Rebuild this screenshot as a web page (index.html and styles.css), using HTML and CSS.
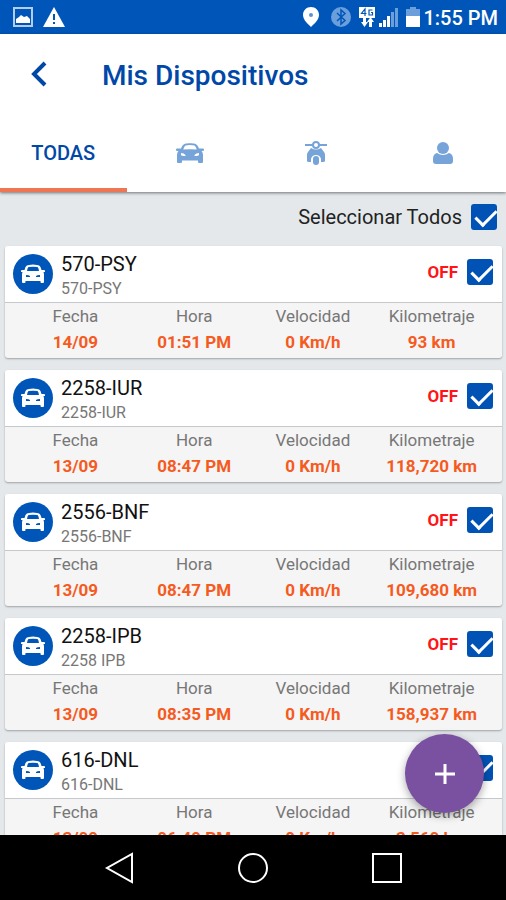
FILE: index.html
```
<!DOCTYPE html>
<html lang="es">
<head>
    <title>Mis Dispositivos</title>
    <meta name="viewport" content="width=device-width, initial-scale=1">
    <meta charset="UTF-8">
    <link rel="stylesheet" href="styles.css">
</head>
<body>
    <svg class="sprite" aria-hidden="true">
        <symbol id="car" viewBox="0 0 28 20">
            <path fill-rule="evenodd" d="M9 .8C11 0 17 0 19 .8C21 1.500 22.200 3.500 23 5.500H27Q28 5.500 28 6.500Q28 8 27 8H25.500Q27 9.500 27 12V19Q27 20 26 20H23Q22 20 22 19V17.500H6V19Q6 20 5 20H2Q1 20 1 19V12Q1 9.500 2.500 8H1Q0 8 0 6.500Q0 5.500 1 5.500H5C5.800 3.500 7 1.500 9 .8ZM9.500 2.500Q8 3.500 7.300 6.500Q14 5.800 20.700 6.500Q20 3.500 18.500 2.500Q14 1.500 9.500 2.500ZM5 10V12Q5.500 13 9.500 13V12Q8 10 5 10ZM23 10V12Q22.500 13 18.500 13V12Q20 10 23 10Z"/>
        </symbol>
        <symbol id="carFront" viewBox="0 0 24 20">
            <path fill-rule="evenodd" d="M8 1Q12 0 16 1Q18.500 1 19.500 3L20.500 6H23Q24 6 24 7V8H22.500L23 10V18Q23 19 22 19H20.500Q19.500 19 19.500 18V17H4.500V18Q4.500 19 3.500 19H2Q1 19 1 18V10L1.500 8H0V7Q0 6 1 6H3.500L4.500 3Q5.500 1 8 1ZM7.500 3Q6.500 3.500 6 7H18Q17.500 3.500 16.500 3Q12 2.500 7.500 3ZM5 11V13H9V12Q8 11 5 11ZM19 11V13H15V12Q16 11 19 11Z"/>
        </symbol>
    </svg>

    <div class="status-bar">
        <div class="status-group">
            <svg width="20" height="20" viewBox="0 0 20 20">
                <rect x="1" y="1" width="18" height="18" fill="none" stroke="#b4cdec" stroke-width="2"/>
                <path d="M3 16V12L6 10L8 8L11 10L14 9L17 12V16Z" fill="#fff"/>
            </svg>
            <svg width="22" height="20" viewBox="0 0 22 20">
                <path d="M11 0L22 20H0Z" fill="#fff"/>
                <path d="M10 7H12V13H10ZM10 15H12V17H10Z" fill="#0056b8"/>
            </svg>
        </div>
        <div class="status-group status-right">
            <svg class="pin" width="18" height="20" viewBox="0 0 18 20">
                <path d="M9 0C4.500 0 1 3.500 1 8C1 13 6 17 9 20C12 17 17 13 17 8C17 3.500 13.500 0 9 0Z" fill="#fff"/>
                <circle cx="9" cy="8" r="2" fill="#5b91d2"/>
            </svg>
            <svg width="20" height="20" viewBox="0 0 20 20">
                <circle cx="10" cy="10" r="10" fill="#6b9fdc"/>
                <path d="M6 6L14 13.500L10 17V3L14 6.500L6 14" fill="none" stroke="#0056b8" stroke-width="1.500"/>
            </svg>
            <svg width="39" height="20" viewBox="0 0 39 20">
                <rect width="16" height="11" fill="#fff"/>
                <path d="M6 9V2L2.500 6.500H7.500M13.500 3H10V8H13.500V5.500H12" fill="none" stroke="#0056b8" stroke-width="1.200"/>
                <path d="M4 11H7V15H9L5.500 20L2 15H4ZM10 20H13V15H15L11.500 10L8 15H10Z" fill="#fff"/>
                <path d="M20 16H23V20H20ZM24 13H27V20H24ZM28 9H31V20H28Z" fill="#fff"/>
                <path d="M32 5H35V20H32ZM36 1H39V20H36Z" fill="#6b9fdc"/>
            </svg>
            <svg width="14" height="20" viewBox="0 0 14 20">
                <path d="M4 0H10V2H14V9H0V2H4Z" fill="#6b9fdc"/>
                <path d="M0 9H14V20H0Z" fill="#fff"/>
            </svg>
            <span class="clock">1:55 PM</span>
        </div>
    </div>

    <header class="header">
        <div class="title-bar">
            <button class="back-button" aria-label="Volver">
                <svg width="16" height="26" viewBox="0 0 16 26">
                    <path d="M14 2L3 13L14 24" fill="none" stroke="#0048a8" stroke-width="4"/>
                </svg>
            </button>
            <h1>Mis Dispositivos</h1>
        </div>
        <nav class="tabs">
            <button class="tab active">TODAS</button>
            <button class="tab" aria-label="Autos">
                <svg width="28" height="20"><use href="#car"/></svg>
            </button>
            <button class="tab" aria-label="Motos">
                <svg width="22" height="24" viewBox="0 0 22 24">
                    <path d="M0 3H8V5H0ZM14 3H22V5H14Z"/>
                    <circle cx="11" cy="4" r="3" fill="none" stroke="#76a3d8" stroke-width="2"/>
                    <path d="M6 7Q11 10 16 7L19 11Q20 12 20 14V20Q20 21 18 21H16V18Q15 14 11 14Q7 14 6 18V21H4Q2 21 2 20V14Q2 12 3 11Z"/>
                    <rect x="8" y="15" width="6" height="9" rx="3"/>
                </svg>
            </button>
            <button class="tab" aria-label="Personas">
                <svg width="22" height="24" viewBox="0 0 22 24">
                    <circle cx="11" cy="7" r="6"/>
                    <path d="M5 12Q11 16 17 12Q21 13 21 18V20Q21 23 18 23H4Q1 23 1 20V18Q1 13 5 12Z"/>
                </svg>
            </button>
        </nav>
    </header>

    <main class="content">
        <div class="select-all">
            <label for="selectAll">Seleccionar Todos</label>
            <input type="checkbox" id="selectAll" checked>
        </div>
        <div class="device-list" id="deviceList"></div>
    </main>

    <div class="nav-bar">
        <button class="fab" aria-label="Agregar">
            <svg width="20" height="20" viewBox="0 0 20 20">
                <path d="M10 0V20M0 10H20" stroke="#fff" stroke-width="3"/>
            </svg>
        </button>
        <button class="nav-button" aria-label="Atrás">
            <svg width="32" height="32" viewBox="0 0 32 32"><path d="M29 2V30L4 16Z"/></svg>
        </button>
        <button class="nav-button" aria-label="Inicio">
            <svg width="32" height="32" viewBox="0 0 32 32"><circle cx="16" cy="16" r="14"/></svg>
        </button>
        <button class="nav-button" aria-label="Recientes">
            <svg width="32" height="32" viewBox="0 0 32 32"><rect x="2" y="2" width="28" height="28"/></svg>
        </button>
    </div>

<script src="script.js"></script>
</body>
</html>
```
FILE: styles.css
```
* {
    box-sizing: border-box;
}
html {
    font-family: Roboto, "Liberation Sans", sans-serif;
}
body {
    margin: 0;
    height: 100vh;
    display: flex;
    flex-direction: column;
    background-color: #e4e8eb;
}
button {
    border: none;
    padding: 0;
    background: none;
    font-family: inherit;
    cursor: pointer;
}
svg {
    display: block;
}
.sprite {
    position: absolute;
    width: 0;
    height: 0;
}

.status-bar {
    flex: none;
    height: 34px;
    padding: 0 8px 0 13px;
    display: flex;
    align-items: center;
    justify-content: space-between;
    background-color: #0056b8;
    color: #fff;
}
.status-group {
    display: flex;
    align-items: center;
    gap: 10px;
}
.status-right {
    gap: 8px;
}
.status-right .pin {
    margin-right: 3px;
}
.clock {
    font-size: 20px;
    line-height: 20px;
    padding-top: 2px;
    margin-left: -5px;
    font-weight: 500;
}

.header {
    flex: none;
    background-color: #fff;
    box-shadow: 0 1px 3px rgba(0,0,0,0.5);
    position: relative;
}
.title-bar {
    height: 80px;
    padding: 0 0 0 31px;
    display: flex;
    align-items: center;
    gap: 55px;
}
.title-bar h1 {
    margin: 0;
    padding-top: 2px;
    font-size: 28px;
    font-weight: 500;
    color: #0048a8;
}
.tabs {
    display: grid;
    grid-template-columns: repeat(4, 1fr);
}
.tab {
    height: 78px;
    display: flex;
    align-items: center;
    justify-content: center;
    border-top: 4px solid transparent;
    border-bottom: 4px solid transparent;
    font-size: 20px;
    font-weight: 500;
    color: #0048a8;
    fill: #76a3d8;
}
.tab.active {
    border-bottom-color: #ee7654;
}

.content {
    flex: 1;
    min-height: 0;
    overflow-y: auto;
    scrollbar-width: none;
}
.select-all {
    height: 54px;
    padding: 0 9px 4px;
    display: flex;
    align-items: center;
    justify-content: flex-end;
    gap: 9px;
    font-size: 20px;
    color: #222;
}
input[type="checkbox"] {
    appearance: none;
    flex: none;
    width: 26px;
    height: 26px;
    margin: 0;
    border: 2px solid #0052b4;
    border-radius: 3px;
    position: relative;
}
input[type="checkbox"]:checked {
    background-color: #0052b4;
}
input[type="checkbox"]:checked::after {
    content: "";
    position: absolute;
    left: 7px;
    top: -1px;
    width: 9px;
    height: 18px;
    border: solid #fff;
    border-width: 0 3px 3px 0;
    transform: rotate(45deg);
}

.device-list {
    padding: 0 4px 12px 5px;
    display: flex;
    flex-direction: column;
    gap: 12px;
}
.card {
    background-color: #f5f5f5;
    border-radius: 3px;
    box-shadow: 0 1px 2px rgba(0,0,0,0.3);
    overflow: hidden;
    flex: none;
}
.card-head {
    height: 57px;
    padding: 0 9px 4px 8px;
    display: flex;
    align-items: center;
    background-color: #fff;
    border-bottom: 1px solid #c4c8cb;
}
.avatar {
    width: 40px;
    height: 40px;
    margin-top: 3px;
    border-radius: 50%;
    background-color: #0056b8;
    fill: #fff;
    display: flex;
    align-items: center;
    justify-content: center;
}
.names {
    flex: 1;
    padding: 7px 0 0 8px;
}
.name {
    display: block;
    font-size: 20px;
    line-height: 26px;
    color: #111;
}
.alias {
    font-size: 16px;
    line-height: 24px;
    color: #777;
}
.state {
    margin-right: 9px;
    font-size: 17px;
    font-weight: 700;
    color: #ff1418;
}
.card table {
    width: 100%;
    padding: 0 11px 3px;
    border-spacing: 0;
    table-layout: fixed;
    text-align: center;
}
.card th, .card td {
    padding: 0;
    line-height: 26px;
    font-size: 17px;
}
.card th {
    font-weight: 400;
    color: #777;
}
.card td {
    font-weight: 700;
    color: #f55a1e;
}

.nav-bar {
    flex: none;
    height: 65px;
    display: flex;
    align-items: center;
    justify-content: center;
    gap: 102px;
    background-color: #000;
    position: relative;
}
.nav-button svg {
    fill: none;
    stroke: #fff;
    stroke-width: 2;
}
.fab {
    position: absolute;
    right: 22px;
    bottom: 87px;
    width: 79px;
    height: 79px;
    border-radius: 50%;
    background-color: #7a51a1;
    box-shadow: 0 3px 8px rgba(0,0,0,0.35);
    display: flex;
    align-items: center;
    justify-content: center;
}
```
FILE: script.js
```
const devices = [
    { name: "570-PSY", alias: "570-PSY", date: "14/09", time: "01:51 PM", speed: "0 Km/h", km: "93 km" },
    { name: "2258-IUR", alias: "2258-IUR", date: "13/09", time: "08:47 PM", speed: "0 Km/h", km: "118,720 km" },
    { name: "2556-BNF", alias: "2556-BNF", date: "13/09", time: "08:47 PM", speed: "0 Km/h", km: "109,680 km" },
    { name: "2258-IPB", alias: "2258 IPB", date: "13/09", time: "08:35 PM", speed: "0 Km/h", km: "158,937 km" },
    { name: "616-DNL", alias: "616-DNL", date: "13/09", time: "06:49 PM", speed: "0 Km/h", km: "3,560 km" }
];

const deviceList = document.getElementById('deviceList');
const selectAll = document.getElementById('selectAll');

deviceList.innerHTML = devices.map((d, i) => `
    <div class="card">
        <div class="card-head">
            <div class="avatar"><svg width="24" height="20"><use href="#carFront"/></svg></div>
            <div class="names">
                <label class="name" for="device${i}">${d.name}</label>
                <div class="alias">${d.alias}</div>
            </div>
            <span class="state">OFF</span>
            <input type="checkbox" id="device${i}" checked>
        </div>
        <table>
            <tr><th>Fecha</th><th>Hora</th><th>Velocidad</th><th>Kilometraje</th></tr>
            <tr><td>${d.date}</td><td>${d.time}</td><td>${d.speed}</td><td>${d.km}</td></tr>
        </table>
    </div>
`).join('');

selectAll.addEventListener('change', () => {
    deviceList.querySelectorAll('input').forEach(box => {
        box.checked = selectAll.checked;
    });
});
```
